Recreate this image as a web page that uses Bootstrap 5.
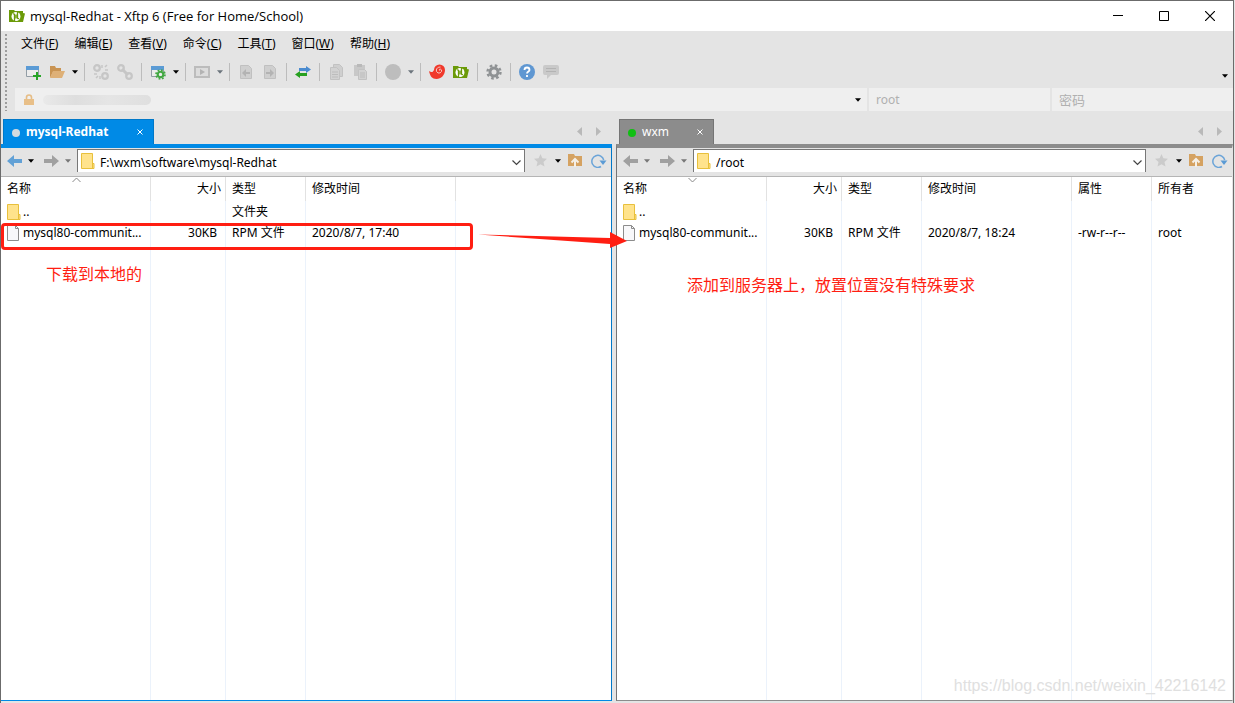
<!DOCTYPE html>
<html lang="zh-CN">
<head>
<meta charset="utf-8">
<meta name="viewport" content="width=device-width, initial-scale=1">
<title>mysql-Redhat - Xftp 6</title>
<link href="https://cdn.jsdelivr.net/npm/bootstrap@5.3.0/dist/css/bootstrap.min.css" rel="stylesheet">
<style>
  body { font-family: "Noto Sans", "Noto Sans CJK SC", sans-serif; font-size: 12px; line-height: 16px; color: #000; background: #e4e4e4; }
  button { border: 0; background: transparent; padding: 0; color: inherit; }
  button svg, .addr svg, .fname svg, .pathbox svg { display: block; flex: none; }
  .app-window { border: 1px solid #6b6b6b; border-bottom: 0; margin-right: 1px; }
  .titlebar { height: 30px; background: #fff; padding-left: 8px; }
  .titlebar h1 { font-family: "Open Sans", "Noto Sans", sans-serif; font-size: 13px; line-height: 16px; font-weight: 400; margin: 0; padding-left: 5px; }
  .winbtn { width: 46px; height: 30px; display: grid; place-items: center; }
  .grip { width: 6px; margin: 2px 0 0 3px; background: radial-gradient(circle, #9d9d9d 1px, transparent 1px) 0 0 / 4px 4px repeat-y; }
  .menu { height: 26px; padding-left: 3px; }
  .menu button { padding: 0 8px; }
  .tools { height: 31px; padding: 0 3px 2px 11px; }
  .ib { width: 24px; height: 24px; display: grid; place-items: center; }
  .ib-nav { width: 22px; }
  .ib-star { width: 16px; }
  .cb { width: 11px; height: 24px; display: grid; place-items: center; }
  .cb-more { height: 20px; }
  .sep { width: 1px; height: 18px; margin: 0 4px; background: #bcbcbc; }
  .addr { gap: 2px; height: 23px; margin-left: 5px; }
  .field { background: #efefef; }
  .field input, .pathbox input { border: 0; background: transparent; outline: 0; min-width: 0; padding: 0; }
  .field input::placeholder { color: #b0b0b0; opacity: 1; }
  .cred { flex: 0 0 181px; }
  .cred input { padding-left: 7px; width: 100%; }
  .cred input[type=password] { font-size: 13px; }
  .masked { width: 108px; height: 10px; border-radius: 5px; background: linear-gradient(90deg, #e9e9e9, #dedede 30%, #e5e5e5 60%, #dfdfdf); }
  .panes { gap: 4px; padding: 8px 0 2px; }
  .pane-left { flex: 611 1 0; min-width: 0; --tone: #008ae6; --edge: #0078c8; }
  .pane-right { flex: 617 1 0; min-width: 0; --tone: #8c8c8c; --edge: #757575; }
  .tabstrip { height: 25px; padding: 0 4px 0 2px; }
  .pane-right .tabstrip { padding-left: 3px; }
  .ptab { height: 25px; background: var(--tone); color: #fff; border: 1px solid var(--edge); border-bottom: 0; padding: 0 8px; }
  .ptab-a { width: 151px; font-weight: 700; }
  .ptab-b { width: 95px; }
  .dot { width: 8px; height: 8px; border-radius: 50%; margin: 2px 6px 0 0; }
  .dot-idle { background: #d4dadf; }
  .dot-live { background: #0fbf12; }
  .closer { width: 10px; height: 10px; display: grid; place-items: center; }
  .tabprev { margin-right: 2px; }
  .pane-body { border-top: 4px solid var(--tone); border-right: 1px solid var(--edge); border-bottom: 1px solid var(--tone); }
  .pane-right .pane-body { border-left: 1px solid var(--edge); border-right-color: #e4e4e4; }
  .navrow { height: 29px; border-bottom: 1px solid #b5b5b5; padding: 1px 0 4px 2px; }
  .blue-ic { color: #62a1d6; }
  .gray-ic { color: #a0a0a0; }
  .pathbox { background: #fff; border: 1px solid #777; border-bottom: 0; margin: 0 7px 0 4px; padding: 0 3px; height: 23px; }
  .pathbox input { padding: 3px 0 0 5px; }
  .pathbox button { padding-top: 3px; color: #444; }
  .files { table-layout: fixed; width: 100%; background: #fff; border-collapse: separate; border-spacing: 0; }
  .files th { height: 24px; font-weight: 400; border-right: 1px solid #e2e2e2; padding: 0 6px; }
  .files td { height: 21px; border-right: 1px solid #ebf2fb; padding: 0 6px; white-space: nowrap; overflow: hidden; }
  .files th:last-child, .files td:last-child { border-right: 0; }
  .fname > div { gap: 2px; }
  .files .num { text-align: right; }
  .files th.num { padding-right: 4px; }
  .files td.num { padding-right: 8px; }
  .filler, .files .filler td { height: 100%; }
  .c150 { width: 150px; } .c75 { width: 75px; } .c80 { width: 80px; }
  .sorter { left: 71px; top: 0; color: #888; }
  .note { color: #ff1e12; font-size: 16px; line-height: 24px; pointer-events: none; }
  .note-a { left: 45px; top: 85px; }
  .note-b { left: 70px; top: 96px; }
  .frame { left: 0; top: 46px; width: 472px; height: 27px; border: 3px solid #ff1e12; border-radius: 4px; pointer-events: none; }
  .pointer { left: 476px; top: 52px; z-index: 3; pointer-events: none; }
  .stamp { right: 6px; bottom: 4px; font: 16px/20px "Liberation Sans", Arial, sans-serif; color: #e0e0e0; }
</style>
</head>
<body>
<svg class="d-none">
  <symbol id="down" viewBox="0 0 7 4"><path d="M0 0h7L3.500 4z" fill="currentColor"/></symbol>
  <symbol id="xftp" viewBox="0 0 16 14"><path d="M0 1h5l1 1h8v2l2 .5L14 13H0z" fill="#6b9a08"/><circle cx="7" cy="7.500" r="4.500" fill="#fff"/><path d="M5.500 12V6q0-1.500-1.500-1M8.500 3v5.500q0 1.500 1.500 1M7 5.500v4" fill="none" stroke="#6b9a08" stroke-width="1.300"/></symbol>
  <symbol id="win" viewBox="0 0 16 16"><path d="M1.500 2.500h12v10h-12z" fill="#ececec" stroke="#929da5"/><path d="M1 2h13v4H1z" fill="#5b9bd5"/></symbol>
  <symbol id="gear" viewBox="0 0 16 16"><circle cx="8" cy="8" r="4" fill="none" stroke="currentColor" stroke-width="3"/><circle cx="8" cy="8" r="6.500" fill="none" stroke="currentColor" stroke-width="2.400" stroke-dasharray="2.600 2.505"/></symbol>
  <symbol id="chain" viewBox="0 0 16 16"><g fill="none" stroke="currentColor" stroke-width="2.200"><circle cx="4" cy="4" r="2.800"/><circle cx="12" cy="12" r="2.800"/></g></symbol>
  <symbol id="larrow" viewBox="0 0 15 12"><path d="M0 6l7-6v4h8v4H7v4z" fill="currentColor"/></symbol>
  <symbol id="rarrow" viewBox="0 0 15 12"><path d="M15 6L8 0v4H0v4h8v4z" fill="currentColor"/></symbol>
  <symbol id="folder" viewBox="0 0 14 16"><path d="M.500.500h11v10h1.500v5H.500z" fill="#ffe38c" stroke="#e8c03c"/><path d="M11.500 10v5.500" stroke="#e8c03c"/></symbol>
  <symbol id="file" viewBox="0 0 14 16"><path d="M.500.500h8l3 3v12H.500z" fill="#f8f8fa" stroke="#8c8c8c"/><path d="M8.500.500v3h3" fill="none" stroke="#8c8c8c"/></symbol>
  <symbol id="star" viewBox="0 0 13 13"><path d="M6.500 0l1.900 4.300 4.600.5-3.500 3.100 1 4.700-4-2.400-4 2.400 1-4.700L0 4.800l4.600-.5z" fill="#cbcbcb"/></symbol>
  <symbol id="up" viewBox="0 0 14 13"><path d="M0 0h6l1 2h7v10H0z" fill="#d5a261"/><path d="M3.500 8.500L7 5l3.500 3.500M7 5.500V13" fill="none" stroke="#f5efe6" stroke-width="2"/></symbol>
  <symbol id="reload" viewBox="0 0 16 14"><path d="M10 12.500A6 6 0 1 1 12.700 6" fill="none" stroke="#6ba4d8" stroke-width="1.500"/><path d="M8.500 6.500h7L12 11z" fill="#5b9bd5"/></symbol>
  <symbol id="chev" viewBox="0 0 9 6"><path d="M.500.500l4 4 4-4" fill="none" stroke="currentColor" stroke-width="1.200"/></symbol>
  <symbol id="cross" viewBox="0 0 6 6"><path d="M.500.500l5 5m0-5l-5 5" stroke="currentColor"/></symbol>
  <symbol id="tri" viewBox="0 0 5 9"><path d="M5 0v9L0 4.500z" fill="#b9b9b9"/></symbol>
  <symbol id="trir" viewBox="0 0 5 9"><path d="M0 0v9l5-4.500z" fill="#b9b9b9"/></symbol>
</svg>

<div class="app-window d-flex flex-column vh-100">
  <header class="titlebar d-flex align-items-center">
    <svg width="16" height="14"><use href="#xftp"/></svg>
    <h1 class="flex-grow-1">mysql-Redhat - Xftp 6 (Free for Home/School)</h1>
    <button class="winbtn" aria-label="最小化"><svg width="10" height="10"><path d="M0 4.500h10" stroke="#000"/></svg></button>
    <button class="winbtn" aria-label="最大化"><svg width="10" height="10"><path d="M.500.500h9v9h-9z" fill="none" stroke="#000"/></svg></button>
    <button class="winbtn" aria-label="关闭"><svg width="10" height="10"><path d="M0 0l10 10M10 0L0 10" stroke="#000" stroke-width="1.200"/></svg></button>
  </header>

  <div class="d-flex">
    <div class="grip"></div>
    <div class="flex-grow-1">
      <nav class="menu d-flex align-items-center">
        <button>文件(<u>F</u>)</button><button>编辑(<u>E</u>)</button><button>查看(<u>V</u>)</button><button>命令(<u>C</u>)</button><button>工具(<u>T</u>)</button><button>窗口(<u>W</u>)</button><button>帮助(<u>H</u>)</button>
      </nav>
      <div class="tools d-flex align-items-center">
        <button class="ib" aria-label="新建"><svg width="16" height="16"><use href="#win"/><path d="M12 8v8M8 12h8" stroke="#27a527" stroke-width="2"/></svg></button>
        <button class="ib" aria-label="打开"><svg width="16" height="16"><path d="M1 2h5l1 2h5v4H4l-3 6z" fill="#c99453"/><path d="M4 7h12l-3 7H1z" fill="#deb077"/></svg></button>
        <button class="cb" aria-label="打开列表"><svg width="6" height="4"><use href="#down"/></svg></button>
        <span class="sep"></span>
        <button class="ib" aria-label="断开"><svg width="16" height="16" color="#c6c6c6"><use href="#chain"/><path d="M9 1v3M12 3l2-2M12 6h3M1 10h3M3 14l2-2M7 12v3" stroke="currentColor" stroke-width="1.500"/></svg></button>
        <button class="ib" aria-label="重连"><svg width="16" height="16" color="#c6c6c6"><use href="#chain"/><path d="M5 5l6 6" stroke="currentColor" stroke-width="3"/></svg></button>
        <span class="sep"></span>
        <button class="ib" aria-label="属性"><svg width="16" height="16"><use href="#win"/><svg x="5" y="5" width="11" height="11" color="#43a843"><use href="#gear"/></svg></svg></button>
        <button class="cb" aria-label="属性列表"><svg width="6" height="4"><use href="#down"/></svg></button>
        <span class="sep"></span>
        <button class="ib" aria-label="运行"><svg width="16" height="16"><path d="M1 3h14v10H1z" fill="#dcdcdc" stroke="#bcbcbc" stroke-width="2"/><path d="M6 5l5 3-5 3z" fill="#b3b3b3"/></svg></button>
        <button class="cb text-secondary" aria-label="运行列表"><svg width="6" height="4"><use href="#down"/></svg></button>
        <span class="sep"></span>
        <button class="ib" aria-label="下载"><svg width="16" height="16"><path d="M2.500 1.500h8l3 3v10h-11z" fill="#cfcfcf" stroke="#c0c0c0"/><path d="M4 9l4-4v3h4v2H8v3z" fill="#b3b3b3"/></svg></button>
        <button class="ib" aria-label="上传"><svg width="16" height="16"><path d="M2.500 1.500h8l3 3v10h-11z" fill="#cfcfcf" stroke="#c0c0c0"/><path d="M12 9L8 5v3H4v2h4v3z" fill="#b3b3b3"/></svg></button>
        <span class="sep"></span>
        <button class="ib" aria-label="同步"><svg width="16" height="16"><path d="M16 5.500L11 2v2H4v3h7v2z" fill="#4a8bd0"/><path d="M0 10.500L5 7v2h7v3H5v2z" fill="#27a020"/></svg></button>
        <span class="sep"></span>
        <button class="ib" aria-label="复制"><svg width="16" height="16"><path d="M5.500.500h6l3 3v9h-9z" fill="#cfcfcf" stroke="#c2c2c2"/><path d="M2.500 3.500h6l3 3v9h-9z" fill="#d2d2d2" stroke="#c2c2c2"/><path d="M4 8h6M4 10.500h6M4 13h6" stroke="#bcbcbc"/></svg></button>
        <button class="ib" aria-label="粘贴"><svg width="16" height="16"><path d="M2 1h11v11H2z" fill="#c8c8c8"/><path d="M5 0h5v3H5z" fill="#b9b9b9"/><path d="M6.500 5.500h6l2 2v8h-8z" fill="#d2d2d2" stroke="#c2c2c2"/><path d="M8 9h5M8 11h5M8 13h5" stroke="#bcbcbc"/></svg></button>
        <span class="sep"></span>
        <button class="ib" aria-label="状态"><svg width="16" height="16"><circle cx="8" cy="8" r="8" fill="#bdbdbd"/></svg></button>
        <button class="cb text-secondary" aria-label="状态列表"><svg width="6" height="4"><use href="#down"/></svg></button>
        <span class="sep"></span>
        <button class="ib" aria-label="Xshell"><svg width="16" height="16"><path d="M0 7c3 2 4 1 5-1a5.300 5.300 0 0 1 11 0c0 5-4 9-8.500 9C3 15 1 12 0 7z" fill="#f0392b"/><path d="M10.500 6.500q-.500-1.500.700-1.500 1.800.5 1.300 2.500-1 2-3.500 1.500-2.500-1.500-1.500-4 1.500-2.500 4-2" fill="none" stroke="#f5c9c4"/></svg></button>
        <button class="ib" aria-label="Xftp"><svg width="16" height="14"><use href="#xftp"/></svg></button>
        <span class="sep"></span>
        <button class="ib" aria-label="选项"><svg width="16" height="16" color="#8f9294"><use href="#gear"/></svg></button>
        <span class="sep"></span>
        <button class="ib" aria-label="帮助"><svg width="16" height="16"><circle cx="8" cy="8" r="8" fill="#5f97d2"/><path d="M5.500 6q0-2.500 2.500-2.500T10.500 6C10.500 7.500 8 7.500 8 9.500M8 11v2" fill="none" stroke="#fff" stroke-width="1.800"/></svg></button>
        <button class="ib" aria-label="反馈"><svg width="16" height="16"><path d="M2 1h12q2 0 2 2v6q0 2-2 2H8l-4 4v-4H2q-2 0-2-2V3q0-2 2-2z" fill="#c9c9c9"/><path d="M3 4.500h10M3 7.500h10" stroke="#b3b3b3"/></svg></button>
        <button class="cb cb-more ms-auto align-self-end" aria-label="更多"><svg width="6" height="4"><use href="#down"/></svg></button>
      </div>
      <div class="addr d-flex">
        <div class="field flex-grow-1 d-flex align-items-center">
          <svg width="12" height="12" class="ms-2 me-2"><path d="M3.500 6V3.500q0-2.500 2.500-2.500t2.500 2.500V6" fill="none" stroke="#e6bd86" stroke-width="1.600"/><path d="M1 5h10v6H1z" fill="#e8bf88"/></svg>
          <span class="masked"></span>
          <button class="cb ms-auto me-1" aria-label="主机列表"><svg width="6" height="4"><use href="#down"/></svg></button>
        </div>
        <div class="field cred d-flex"><input type="text" placeholder="root" aria-label="用户名"></div>
        <div class="field cred d-flex"><input type="password" placeholder="密码" aria-label="密码"></div>
      </div>
    </div>
  </div>

  <main class="panes d-flex flex-grow-1">
    <section class="pane-left d-flex flex-column">
      <div class="tabstrip d-flex align-items-center">
        <div class="ptab ptab-a d-flex align-items-center"><span class="dot dot-idle"></span><span>mysql-Redhat</span><button class="closer ms-auto" aria-label="关闭标签"><svg width="6" height="6"><use href="#cross"/></svg></button></div>
        <button class="ib tabprev ms-auto" aria-label="上一个"><svg width="5" height="9"><use href="#tri"/></svg></button>
        <button class="cb me-1" aria-label="下一个"><svg width="5" height="9"><use href="#trir"/></svg></button>
      </div>
      <div class="pane-body flex-grow-1 d-flex flex-column">
        <div class="navrow d-flex align-items-center">
          <button class="ib ib-nav blue-ic" aria-label="后退"><svg width="15" height="12"><use href="#larrow"/></svg></button>
          <button class="cb" aria-label="后退列表"><svg width="6" height="4"><use href="#down"/></svg></button>
          <button class="ib ib-nav gray-ic ms-1" aria-label="前进"><svg width="15" height="12"><use href="#rarrow"/></svg></button>
          <button class="cb" aria-label="前进列表"><svg width="6" height="4" color="#777"><use href="#down"/></svg></button>
          <div class="pathbox flex-grow-1 d-flex align-items-center"><svg width="14" height="16"><use href="#folder"/></svg><input type="text" class="flex-grow-1" value="F:\wxm\software\mysql-Redhat" aria-label="本地路径"><button aria-label="展开路径"><svg width="9" height="6"><use href="#chev"/></svg></button></div>
          <button class="ib ib-star" aria-label="收藏"><svg width="13" height="13"><use href="#star"/></svg></button>
          <button class="cb ms-1" aria-label="收藏列表"><svg width="6" height="4"><use href="#down"/></svg></button>
          <button class="ib" aria-label="上级目录"><svg width="14" height="13"><use href="#up"/></svg></button>
          <button class="ib" aria-label="刷新"><svg width="16" height="14"><use href="#reload"/></svg></button>
        </div>
        <div class="position-relative flex-grow-1 d-flex">
          <table class="files">
            <colgroup><col class="c150"><col class="c75"><col class="c80"><col class="c150"><col></colgroup>
            <thead><tr><th>名称</th><th class="num">大小</th><th>类型</th><th>修改时间</th><th></th></tr></thead>
            <tbody>
              <tr><td class="fname"><div class="d-flex align-items-center"><svg width="14" height="16"><use href="#folder"/></svg>..</div></td><td></td><td>文件夹</td><td></td><td></td></tr>
              <tr><td class="fname"><div class="d-flex align-items-center"><svg width="14" height="16"><use href="#file"/></svg>mysql80-communit...</div></td><td class="num">30KB</td><td>RPM 文件</td><td>2020/8/7, 17:40</td><td></td></tr>
              <tr class="filler"><td></td><td></td><td></td><td></td><td></td></tr>
            </tbody>
          </table>
          <svg class="sorter position-absolute" width="9" height="6"><path d="M.500 5l4-4 4 4" fill="none" stroke="currentColor"/></svg>
          <div class="frame position-absolute"></div>
          <svg class="pointer position-absolute" width="150" height="20"><path d="M1 5.500L133 9V3l17 9-17 7v-4Z" fill="#ff1e12"/></svg>
          <div class="note note-a position-absolute">下载到本地的</div>
        </div>
      </div>
    </section>

    <section class="pane-right d-flex flex-column">
      <div class="tabstrip d-flex align-items-center">
        <div class="ptab ptab-b d-flex align-items-center"><span class="dot dot-live"></span><span>wxm</span><button class="closer ms-auto" aria-label="关闭标签"><svg width="6" height="6"><use href="#cross"/></svg></button></div>
        <button class="ib tabprev ms-auto" aria-label="上一个"><svg width="5" height="9"><use href="#tri"/></svg></button>
        <button class="cb me-1" aria-label="下一个"><svg width="5" height="9"><use href="#trir"/></svg></button>
      </div>
      <div class="pane-body flex-grow-1 d-flex flex-column">
        <div class="navrow d-flex align-items-center">
          <button class="ib ib-nav gray-ic" aria-label="后退"><svg width="15" height="12"><use href="#larrow"/></svg></button>
          <button class="cb" aria-label="后退列表"><svg width="6" height="4" color="#777"><use href="#down"/></svg></button>
          <button class="ib ib-nav gray-ic ms-1" aria-label="前进"><svg width="15" height="12"><use href="#rarrow"/></svg></button>
          <button class="cb" aria-label="前进列表"><svg width="6" height="4" color="#777"><use href="#down"/></svg></button>
          <div class="pathbox flex-grow-1 d-flex align-items-center"><svg width="14" height="16"><use href="#folder"/></svg><input type="text" class="flex-grow-1" value="/root" aria-label="远程路径"><button aria-label="展开路径"><svg width="9" height="6"><use href="#chev"/></svg></button></div>
          <button class="ib ib-star" aria-label="收藏"><svg width="13" height="13"><use href="#star"/></svg></button>
          <button class="cb ms-1" aria-label="收藏列表"><svg width="6" height="4"><use href="#down"/></svg></button>
          <button class="ib" aria-label="上级目录"><svg width="14" height="13"><use href="#up"/></svg></button>
          <button class="ib" aria-label="刷新"><svg width="16" height="14"><use href="#reload"/></svg></button>
        </div>
        <div class="position-relative flex-grow-1 d-flex">
          <table class="files">
            <colgroup><col class="c150"><col class="c75"><col class="c80"><col class="c150"><col class="c80"><col></colgroup>
            <thead><tr><th>名称</th><th class="num">大小</th><th>类型</th><th>修改时间</th><th>属性</th><th>所有者</th></tr></thead>
            <tbody>
              <tr><td class="fname"><div class="d-flex align-items-center"><svg width="14" height="16"><use href="#folder"/></svg>..</div></td><td></td><td></td><td></td><td></td><td></td></tr>
              <tr><td class="fname"><div class="d-flex align-items-center"><svg width="14" height="16"><use href="#file"/></svg>mysql80-communit...</div></td><td class="num">30KB</td><td>RPM 文件</td><td>2020/8/7, 18:24</td><td>-rw-r--r--</td><td>root</td></tr>
              <tr class="filler"><td></td><td></td><td></td><td></td><td></td><td></td></tr>
            </tbody>
          </table>
          <svg class="sorter position-absolute" width="9" height="6"><path d="M.500 1l4 4 4-4" fill="none" stroke="currentColor"/></svg>
          <div class="note note-b position-absolute">添加到服务器上，放置位置没有特殊要求</div>
          <div class="stamp position-absolute">https://blog.csdn.net/weixin_42216142</div>
        </div>
      </div>
    </section>
  </main>
</div>
<script src="https://cdn.jsdelivr.net/npm/bootstrap@5.3.0/dist/js/bootstrap.bundle.min.js"></script>
</body>
</html>
